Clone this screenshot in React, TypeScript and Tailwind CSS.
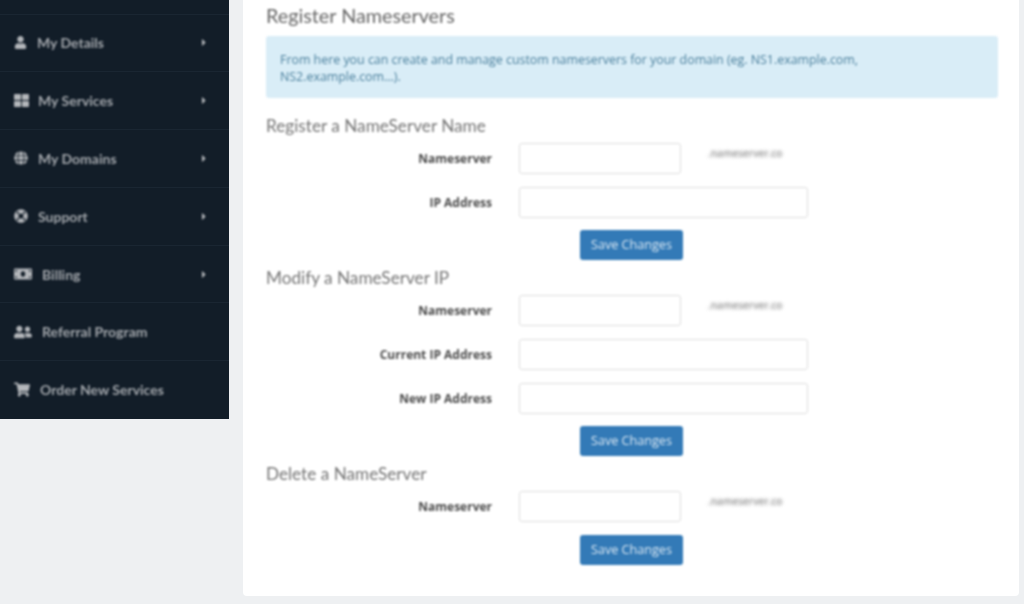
import React from "react";
import type { IconType } from "react-icons";
import {
  FaCaretRight,
  FaGlobe,
  FaLifeRing,
  FaMoneyBill,
  FaShoppingCart,
  FaThLarge,
  FaUser,
  FaUserFriends,
} from "react-icons/fa";

interface NavItem {
  label: string;
  icon: IconType;
  iconClass: string;
  gapClass: string;
  caret?: boolean;
}

const navItems: NavItem[] = [
  { label: "My Details", icon: FaUser, iconClass: "h-[13px] w-[13px]", gapClass: "gap-[10px]", caret: true },
  { label: "My Services", icon: FaThLarge, iconClass: "h-[15px] w-[15px]", gapClass: "gap-[9px]", caret: true },
  { label: "My Domains", icon: FaGlobe, iconClass: "h-[14px] w-[14px]", gapClass: "gap-[10px]", caret: true },
  { label: "Support", icon: FaLifeRing, iconClass: "h-[14px] w-[14px]", gapClass: "gap-[10px]", caret: true },
  { label: "Billing", icon: FaMoneyBill, iconClass: "h-[18px] w-[18px]", gapClass: "gap-[10px]", caret: true },
  { label: "Referral Program", icon: FaUserFriends, iconClass: "h-[18px] w-[18px]", gapClass: "gap-[10px]" },
  { label: "Order New Services", icon: FaShoppingCart, iconClass: "h-[15px] w-[16px]", gapClass: "gap-[10px]" },
];

const NavRow = ({ item }: { item: NavItem }) => {
  const Icon = item.icon;
  return (
    <div className="flex h-[57.8px] items-center border-t border-[#1a2632] pl-[14px] pr-[21px]">
      <div className={`flex flex-1 items-center blur-[0.8px] ${item.gapClass}`}>
        <Icon className={`${item.iconClass} text-[#b4b7bb]`} />
        <span className="text-[14px] font-bold text-[#a3a7ac]">{item.label}</span>
      </div>
      {item.caret && <FaCaretRight className="h-[11px] w-[8px] text-[#b4b7bb] blur-[0.8px]" />}
    </div>
  );
};

const Field = ({ label, wide, hint }: { label: string; wide?: boolean; hint?: boolean }) => (
  <div className="flex h-[31px] items-center">
    <label className="w-[226px] text-right font-['Open_Sans',sans-serif] text-[12px] font-bold text-[#4a4a4a]">
      {label}
    </label>
    <div
      className={`ml-[27px] h-[31px] rounded-[3px] border border-[#dddddd] bg-white ${wide ? "w-[289px]" : "w-[162px]"}`}
    />
    {hint && (
      <span className="-mt-[10px] ml-[27px] font-['Open_Sans',sans-serif] text-[10px] font-semibold text-[#8a8a8a] blur-[1.4px]">
        .nameserver.co
      </span>
    )}
  </div>
);

const SaveButton = () => (
  <div className="flex pl-[314px]">
    <button className="h-[30px] w-[103px] rounded-[3px] bg-[#337ab7] font-['Open_Sans',sans-serif] text-[12.6px] text-[#dbe8f3]">
      Save Changes
    </button>
  </div>
);

const SectionTitle = ({ children, first }: { children: React.ReactNode; first?: boolean }) => (
  <h3 className={`h-[20px] text-[17.2px] leading-[20px] text-[#747474] ${first ? "mt-[18px]" : "mt-[8px]"}`}>
    {children}
  </h3>
);

const App = () => {
  return (
    <div className="flex h-[604px] w-[1024px] items-start gap-[14px] overflow-hidden bg-[#eef0f2] font-['Lato',sans-serif]">
      <aside className="w-[229px] bg-[#121d28] pb-[0.5px] pt-[13.5px]">
        {navItems.map((item) => (
          <NavRow key={item.label} item={item} />
        ))}
      </aside>

      <main className="h-[596px] w-[776px] rounded-b-[4px] bg-white pl-[23px] pr-[21px]">
        <div className="blur-[0.8px]">
          <h2 className="h-[36px] pt-[1px] text-[19.8px] leading-[28px] text-[#666666]">Register Nameservers</h2>

          <div className="h-[62px] rounded-[3px] bg-[#d9edf7] px-[14px] pt-[15px] font-['Open_Sans',sans-serif] text-[12.4px] leading-[17px] text-[#4a7f9c]">
            From here you can create and manage custom nameservers for your domain (eg. NS1.example.com,
            <br />
            NS2.example.com...).
          </div>

          <SectionTitle first>Register a NameServer Name</SectionTitle>
          <div className="mt-[7px] flex flex-col gap-[13px]">
            <Field label="Nameserver" hint />
            <Field label="IP Address" wide />
          </div>
          <div className="mt-[12px]">
            <SaveButton />
          </div>

          <SectionTitle>Modify a NameServer IP</SectionTitle>
          <div className="mt-[7px] flex flex-col gap-[13px]">
            <Field label="Nameserver" hint />
            <Field label="Current IP Address" wide />
            <Field label="New IP Address" wide />
          </div>
          <div className="mt-[12px]">
            <SaveButton />
          </div>

          <SectionTitle>Delete a NameServer</SectionTitle>
          <div className="mt-[7px]">
            <Field label="Nameserver" hint />
          </div>
          <div className="mt-[13px]">
            <SaveButton />
          </div>
        </div>
      </main>
    </div>
  );
};

export default App;
